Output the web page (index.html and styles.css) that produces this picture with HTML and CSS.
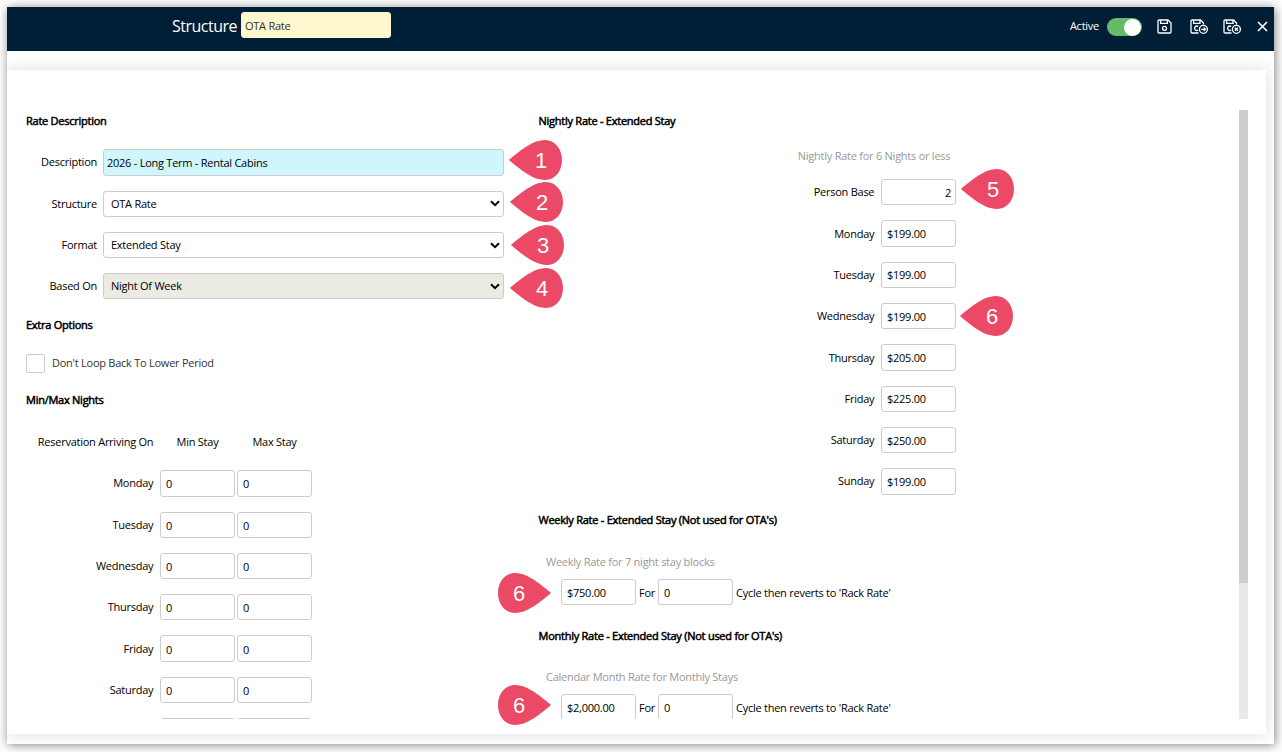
FILE: index.html
```html
<!DOCTYPE html>
<html lang="en">
  <head>
    <meta charset="UTF-8" />
    <meta name="viewport" content="width=device-width, initial-scale=1.0" />
    <title>Rate Structure</title>
    <link rel="stylesheet" href="styles.css">
  </head>
  <body>
    <div class="window">
      <header class="topbar">
        <label class="title" for="name">Structure</label>
        <input class="title_input" id="name" value="OTA Rate" />
        <div class="actions">
          <span class="active_label">Active</span>
          <span class="toggle"></span>
          <svg class="icon save" viewBox="0 0 15 15">
            <path d="M1 2.2Q1 1 2.2 1H11L14 4V12.8Q14 14 12.8 14H2.2Q1 14 1 12.8Z" />
            <path d="M3.6 1V4.4H10.4V1" />
            <circle cx="7.5" cy="9.3" r="2" />
          </svg>
          <svg class="icon save_next" viewBox="0 0 19 15">
            <path d="M8.5 14H2.2Q1 14 1 12.8V2.2Q1 1 2.2 1H10.5L13.5 4V5.5" />
            <path d="M3.6 1V4.4H10V1M8.2 7.6A2.2 2.2 0 1 0 8.2 11" />
            <circle cx="13.4" cy="10.3" r="4" />
            <path d="M11.2 10.3H15.4M13.7 8.5L15.5 10.3L13.7 12.1" />
          </svg>
          <svg class="icon save_close" viewBox="0 0 19 15">
            <path d="M8.5 14H2.2Q1 14 1 12.8V2.2Q1 1 2.2 1H10.5L13.5 4V5.5" />
            <path d="M3.6 1V4.4H10V1M8.2 7.6A2.2 2.2 0 1 0 8.2 11" />
            <circle cx="13.4" cy="10.3" r="4" />
            <path d="M11.9 8.8L14.9 11.8M14.9 8.8L11.9 11.8" />
          </svg>
          <svg class="icon close" viewBox="0 0 11 11">
            <path d="M1 1L10 10M10 1L1 10" />
          </svg>
        </div>
      </header>

      <main class="panel">
        <div class="scroll">
          <section class="left_col">
            <h2>Rate Description</h2>
            <div class="row">
              <label>Description</label>
              <input class="wide description" value="2026 - Long Term - Rental Cabins" />
            </div>
            <div class="row">
              <label>Structure</label>
              <div class="select">OTA Rate<svg viewBox="0 0 10 7"><path d="M1 1.2L5 5.2L9 1.2" /></svg></div>
            </div>
            <div class="row">
              <label>Format</label>
              <div class="select">Extended Stay<svg viewBox="0 0 10 7"><path d="M1 1.2L5 5.2L9 1.2" /></svg></div>
            </div>
            <div class="row">
              <label>Based On</label>
              <div class="select disabled">Night Of Week<svg viewBox="0 0 10 7"><path d="M1 1.2L5 5.2L9 1.2" /></svg></div>
            </div>

            <h2 class="extra">Extra Options</h2>
            <div class="check_row">
              <span class="checkbox"></span>
              <span class="check_text">Don't Loop Back To Lower Period</span>
            </div>

            <h2>Min/Max Nights</h2>
            <div class="night_head">
              <span class="arriving">Reservation Arriving On</span>
              <span>Min Stay</span>
              <span>Max Stay</span>
            </div>
            <div class="row nights"><label>Monday</label><input value="0" /><input value="0" /></div>
            <div class="row nights"><label>Tuesday</label><input value="0" /><input value="0" /></div>
            <div class="row nights"><label>Wednesday</label><input value="0" /><input value="0" /></div>
            <div class="row nights"><label>Thursday</label><input value="0" /><input value="0" /></div>
            <div class="row nights"><label>Friday</label><input value="0" /><input value="0" /></div>
            <div class="row nights"><label>Saturday</label><input value="0" /><input value="0" /></div>
            <div class="row nights"><label></label><input /><input /></div>
          </section>

          <section class="right_col">
            <h2>Nightly Rate - Extended Stay</h2>
            <p class="hint nightly">Nightly Rate for 6 Nights or less</p>
            <div class="row rate"><label>Person Base</label><input class="number" value="2" /></div>
            <div class="row rate"><label>Monday</label><input value="$199.00" /></div>
            <div class="row rate"><label>Tuesday</label><input value="$199.00" /></div>
            <div class="row rate"><label>Wednesday</label><input value="$199.00" /></div>
            <div class="row rate"><label>Thursday</label><input value="$205.00" /></div>
            <div class="row rate"><label>Friday</label><input value="$225.00" /></div>
            <div class="row rate"><label>Saturday</label><input value="$250.00" /></div>
            <div class="row rate"><label>Sunday</label><input value="$199.00" /></div>

            <h2 class="weekly">Weekly Rate - Extended Stay (Not used for OTA's)</h2>
            <p class="hint">Weekly Rate for 7 night stay blocks</p>
            <div class="row cycle">
              <input value="$750.00" /><span class="for">For</span><input value="0" />
              <span class="reverts">Cycle then reverts to 'Rack Rate'</span>
            </div>

            <h2 class="monthly">Monthly Rate - Extended Stay (Not used for OTA's)</h2>
            <p class="hint">Calendar Month Rate for Monthly Stays</p>
            <div class="row cycle">
              <input value="$2,000.00" /><span class="for">For</span><input value="0" />
              <span class="reverts">Cycle then reverts to 'Rack Rate'</span>
            </div>
          </section>

          <div class="scrollbar"><div class="thumb"></div></div>
        </div>
      </main>
    </div>

    <!-- numbered callouts -->
    <svg class="pins" viewBox="0 0 1282 752">
      <defs>
        <path id="drop" d="M0 20C7 14.500 22 0 36 0C46 0 53 9 53 20C53 31 46 40 36 40C22 40 7 25.500 0 20Z" />
      </defs>
      <use href="#drop" x="509" y="140" /><text x="541" y="168">1</text>
      <use href="#drop" x="510" y="182" /><text x="542" y="210">2</text>
      <use href="#drop" x="511" y="225" /><text x="543" y="253">3</text>
      <use href="#drop" x="510" y="268" /><text x="542" y="296">4</text>
      <use href="#drop" x="961" y="169" /><text x="993" y="197">5</text>
      <use href="#drop" x="960" y="296" /><text x="992" y="324">6</text>
      <use href="#drop" transform="translate(551 573) scale(-1 1)" /><text x="519" y="601">6</text>
      <use href="#drop" transform="translate(551 685) scale(-1 1)" /><text x="519" y="713">6</text>
    </svg>
  </body>
</html>
```
FILE: styles.css
```css
* {
  box-sizing: border-box;
}
body {
  height: 752px;
  margin: 0;
  padding: 7px 0 0 7px;
  background: #fff;
  font-family: "Open Sans", sans-serif;
  font-size: 11px;
  line-height: 16px;
  letter-spacing: -0.25px;
  color: #000;
  overflow: hidden;
}
.window {
  display: flex;
  flex-direction: column;
  width: 1267px;
  height: 737px;
  background: #fff;
  box-shadow: 1px 1px 10px rgba(0, 0, 0, 0.5);
}
.topbar {
  display: flex;
  align-items: flex-start;
  flex-shrink: 0;
  height: 44px;
  padding-left: 165px;
  background: #001e36;
  color: #fff;
}
.title {
  width: 69px;
  padding-top: 7px;
  font-size: 16px;
  line-height: 24px;
  letter-spacing: -0.5px;
}
input {
  width: 75px;
  height: 26.3px;
  margin: 0;
  padding: 1px 5px 0;
  border: 1px solid #ccc;
  border-radius: 3px;
  background: #fff;
  font: inherit;
  letter-spacing: inherit;
  color: #000;
  outline: none;
}
input.title_input {
  width: 150px;
  height: 26px;
  margin-top: 5px;
  padding: 0 3px;
  border-color: #fff8cf;
  background: #fff8cf;
  color: #333;
}
.actions {
  display: flex;
  align-items: center;
  height: 38px;
  margin-left: auto;
  padding-right: 6px;
}
.active_label {
  margin-right: 8px;
}
.toggle {
  width: 35px;
  height: 18px;
  margin: 2px 15px 0 0;
  padding-left: 17px;
  border-radius: 9px;
  background: #66bb6a;
}
.toggle::before {
  content: "";
  display: block;
  width: 17px;
  height: 17px;
  margin-top: 0.5px;
  border-radius: 50%;
  background: #fff;
}
.icon {
  fill: none;
  stroke: #fff;
  stroke-width: 1.3;
}
.save {
  width: 15px;
  height: 15px;
  margin-right: 18px;
}
.save_next {
  width: 19px;
  height: 15px;
  margin-right: 14px;
}
.save_close {
  width: 19px;
  height: 15px;
  margin-right: 15px;
}
.close {
  width: 11px;
  height: 11px;
  stroke-width: 1.6;
}
.panel {
  flex-grow: 1;
  margin: 19px 8px 10px 0;
  padding: 40px 18px 15px 19px;
  background: #fff;
  box-shadow: 0 0 16px rgba(0, 0, 0, 0.14);
  clip-path: inset(-19px -8px -10px 0);
}
.scroll {
  display: flex;
  height: 609px;
  overflow: hidden;
}
.left_col {
  flex: 0 0 512.5px;
  padding-top: 3px;
}
.right_col {
  flex-grow: 1;
  padding-top: 3px;
}
h2 {
  margin: 0 0 20.3px;
  font-size: 11px;
  font-weight: 400;
  line-height: 16px;
  -webkit-text-stroke: 0.5px #000;
}
.row {
  display: flex;
  align-items: center;
  height: 26.3px;
  margin-bottom: 15px;
}
.row label {
  width: 71px;
  margin-right: 6px;
  text-align: right;
}
.wide {
  width: 401px;
}
.description {
  padding: 1px 3px 0;
  background: #cff6fc;
}
.select {
  display: flex;
  align-items: center;
  justify-content: space-between;
  width: 401px;
  height: 26.3px;
  padding: 0 3px 0 7px;
  border: 1px solid #ccc;
  border-radius: 3px;
}
.select svg {
  width: 10px;
  height: 7px;
  fill: none;
  stroke: #000;
  stroke-width: 2;
}
.disabled {
  background: #ebebe4;
}
h2.extra {
  margin: 17.5px 0 21px;
}
.check_row {
  display: flex;
  align-items: center;
  height: 19px;
  margin-bottom: 19px;
}
.checkbox {
  width: 19px;
  height: 19px;
  border: 1px solid #ccc;
  border-radius: 2px;
}
.check_text {
  margin-left: 7px;
  color: #333;
}
.night_head {
  display: flex;
  gap: 2px;
  margin: 26px 0 20.3px;
}
.night_head span {
  width: 75px;
  text-align: center;
}
.night_head .arriving {
  width: 127.3px;
  margin-right: 4.7px;
  text-align: right;
}
.nights {
  gap: 2px;
}
.row.nights label {
  width: 127.3px;
  margin-right: 4.7px;
}
.hint {
  margin: 26px 0 9.2px 7.5px;
  color: #999;
}
.hint.nightly {
  width: 411.8px;
  margin: -1.3px 0 15.2px 0;
  text-align: right;
}
.row.rate label {
  width: 335.8px;
  margin-right: 6.7px;
}
.rate input {
  padding-top: 0;
}
.rate input.number {
  padding: 1px 4px 0;
  text-align: right;
}
h2.weekly {
  margin: 17.4px 0 0;
}
h2.monthly {
  margin: 22.5px 0 0;
}
.monthly + .hint {
  margin-top: 25px;
}
.cycle {
  margin: 0 0 0 22.5px;
}
.for {
  width: 22px;
  padding-top: 1px;
  text-align: center;
}
.reverts {
  margin-left: 3px;
  padding-top: 1px;
}
.scrollbar {
  flex: 0 0 9px;
  background: #e9e9e9;
}
.thumb {
  height: 473px;
  background: #cdcdcd;
}
.pins {
  position: absolute;
  top: 0;
  left: 0;
  width: 1282px;
  height: 752px;
  fill: #eb4965;
  pointer-events: none;
}
.pins text {
  fill: #fff;
  font-family: "Liberation Sans", Arial, sans-serif;
  font-size: 22px;
  letter-spacing: 0;
  text-anchor: middle;
}
```
